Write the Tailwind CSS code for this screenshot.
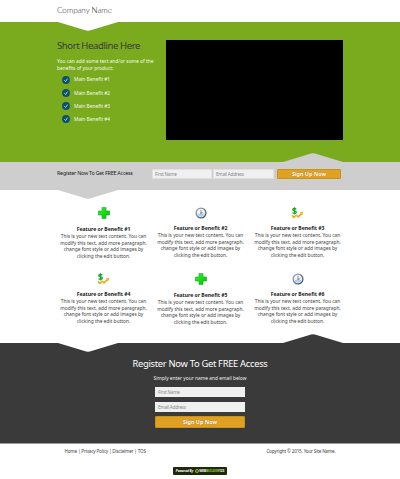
<!DOCTYPE html>
<html lang="en">
<head>
<meta charset="utf-8">
<title>Company Name</title>
<script src="https://cdn.jsdelivr.net/npm/@tailwindcss/browser@4"></script>
</head>
<body class="w-[400px] h-[479px] overflow-hidden bg-white font-['Noto_Sans','Open_Sans',sans-serif] text-[4.85px] leading-[6.6px] text-[#444]">
<svg class="absolute w-0 h-0">
  <defs>
    <linearGradient id="gr" x1="0" y1="0" x2="1" y2="1"><stop offset="0" stop-color="#4be34b"/><stop offset=".5" stop-color="#11e011"/><stop offset="1" stop-color="#08b508"/></linearGradient>
    <linearGradient id="rim" x1="0" y1="0" x2="1" y2="1"><stop offset="0" stop-color="#a5adb6"/><stop offset="1" stop-color="#2f4664"/></linearGradient>
    <symbol id="plus" viewBox="0 0 12 12"><path d="M4 .4h4V4h3.6v4H8v3.6H4V8H.4V4H4z" fill="url(#gr)" stroke="#20a020" stroke-width=".6" stroke-linejoin="round"/></symbol>
    <symbol id="clock" viewBox="0 0 12 12"><circle cx="6" cy="6" r="4.9" fill="#f0f7fd" stroke="url(#rim)" stroke-width="1.3"/><path d="M2.2 6.8a3.9 3.9 0 0 0 7.6 0z" fill="#a9d2f5"/><path d="M6 2.8V6.3L8.2 5.6" fill="none" stroke="#5b6f88" stroke-width=".7"/><circle cx="6" cy="6.3" r="1" fill="#ee8b3c"/></symbol>
    <symbol id="money" viewBox="0 0 13 12"><path d="M1.2 8.2l1.6 2.3 2.4-2.2 1.9 1.6 3.7-3.5" fill="none" stroke="#efa51c" stroke-width="1.5" stroke-linejoin="round"/><path d="M8.8 5.2l3.4-.5-.5 3.3z" fill="#f4b52b"/><path d="M5.2 2.2C4.5 1.2 1.8 1.2 1.8 2.7c0 1.6 3.5.9 3.5 2.6 0 1.5-2.9 1.5-3.7.3M3.5.3v7.2" fill="none" stroke="#16a826" stroke-width="1.3"/></symbol>
    <symbol id="check" viewBox="0 0 8 8"><circle cx="4" cy="4" r="3.9" fill="#0b4f78"/><path d="M2.3 4.2l1.3 1.4 2-3.1" fill="none" stroke="#a9d58a" stroke-width="1"/></symbol>
    <symbol id="down" viewBox="0 0 60 9"><path d="M0 0h60L33.5 8.1Q30 9.3 26.5 8.1z" fill="currentColor"/></symbol>
    <symbol id="up" viewBox="0 0 60 9"><path d="M0 9h60L33.5.9Q30-.3 26.5.9z" fill="currentColor"/></symbol>
  </defs>
</svg>

<header class="relative h-[22px] pl-[57px] pt-[4px]">
  <h1 class="font-[Lato] font-light text-[8px] leading-[12px] tracking-[-0.03px] text-[#222] whitespace-nowrap">Company Name</h1>
  <svg class="absolute left-[58px] top-[22px] w-[60px] h-[9px] text-white z-10"><use href="#down"/></svg>
</header>

<section class="relative h-[140px] bg-[#7aab1e] flex pl-[57px] text-[#f4f9ea]">
  <div class="w-[109px] pt-[17px] whitespace-nowrap">
    <h2 class="text-[9.6px] leading-[14px] tracking-[-0.43px] text-[#3a3a3a]">Short Headline Here</h2>
    <p class="mt-[5px] leading-[6.6px]">You can add some text and/or some of the<br>benefits of your product:</p>
    <ul class="mt-[2px] pl-[5px]">
      <li class="flex items-center h-[13.2px] gap-[4px]"><svg class="size-[8px]"><use href="#check"/></svg>Main Benefit #1</li>
      <li class="flex items-center h-[13.2px] gap-[4px]"><svg class="size-[8px]"><use href="#check"/></svg>Main Benefit #2</li>
      <li class="flex items-center h-[13.2px] gap-[4px]"><svg class="size-[8px]"><use href="#check"/></svg>Main Benefit #3</li>
      <li class="flex items-center h-[13.2px] gap-[4px]"><svg class="size-[8px]"><use href="#check"/></svg>Main Benefit #4</li>
    </ul>
  </div>
  <div class="mt-[18px] w-[177px] h-[100px] bg-black"></div>
  <svg class="absolute left-[283px] top-[131px] w-[60px] h-[9px] text-[#cecece]"><use href="#up"/></svg>
</section>

<section class="relative h-[28px] bg-[#cecece] flex pl-[57px] pt-[7px] whitespace-nowrap">
  <h3 class="w-[95px] leading-[8px] text-[5.4px] tracking-[-0.24px] text-[#222]">Register Now To Get FREE Access</h3>
  <div class="w-[60px] h-[10px] bg-[#f0f0f0] border border-[#e0e0e0] pl-[2px] leading-[8px] text-[4.6px] tracking-[-0.17px] text-[#8a8a8a]">First Name</div>
  <div class="ml-[1px] w-[61px] h-[10px] bg-[#f0f0f0] border border-[#e0e0e0] pl-[2px] leading-[8px] text-[4.6px] tracking-[-0.2px] text-[#8a8a8a]">Email Address</div>
  <button class="ml-[3px] w-[64px] h-[10px] rounded-[1px] bg-[#dfa324] border-[0.5px] border-[#c8901c] text-white font-bold text-[5.4px] leading-[9px] text-shadow-[0_0_1px_#8a6010]">Sign Up Now</button>
  <svg class="absolute left-[58px] top-[28px] w-[60px] h-[9px] text-[#cecece]"><use href="#down"/></svg>
</section>

<main class="h-[153px] pl-[55px] pt-[17px] grid grid-cols-[repeat(3,97px)] grid-rows-[66px_66px] text-center whitespace-nowrap">
  <article class="flex flex-col items-center">
    <svg class="size-[12px]"><use href="#plus"/></svg>
    <h4 class="mt-[7px] font-bold text-[5.1px] text-[#222] leading-[7px]">Feature or Benefit #1</h4>
    <p>This is your new text content. You can<br>modify this text, add more paragraph,<br>change font style or add images by<br>clicking the edit button.</p>
  </article>
  <article class="flex flex-col items-center">
    <svg class="size-[12px]"><use href="#clock"/></svg>
    <h4 class="mt-[6px] font-bold text-[5.1px] text-[#222] leading-[7px]">Feature or Benefit #2</h4>
    <p>This is your new text content. You can<br>modify this text, add more paragraph,<br>change font style or add images by<br>clicking the edit button.</p>
  </article>
  <article class="flex flex-col items-center">
    <svg class="w-[13px] h-[12px]"><use href="#money"/></svg>
    <h4 class="mt-[6px] font-bold text-[5.1px] text-[#222] leading-[7px]">Feature or Benefit #3</h4>
    <p>This is your new text content. You can<br>modify this text, add more paragraph,<br>change font style or add images by<br>clicking the edit button.</p>
  </article>
  <article class="flex flex-col items-center">
    <svg class="w-[13px] h-[12px]"><use href="#money"/></svg>
    <h4 class="mt-[6px] font-bold text-[5.1px] text-[#222] leading-[7px]">Feature or Benefit #4</h4>
    <p>This is your new text content. You can<br>modify this text, add more paragraph,<br>change font style or add images by<br>clicking the edit button.</p>
  </article>
  <article class="flex flex-col items-center">
    <svg class="size-[12px]"><use href="#plus"/></svg>
    <h4 class="mt-[7px] font-bold text-[5.1px] text-[#222] leading-[7px]">Feature or Benefit #5</h4>
    <p>This is your new text content. You can<br>modify this text, add more paragraph,<br>change font style or add images by<br>clicking the edit button.</p>
  </article>
  <article class="flex flex-col items-center">
    <svg class="size-[12px]"><use href="#clock"/></svg>
    <h4 class="mt-[6px] font-bold text-[5.1px] text-[#222] leading-[7px]">Feature or Benefit #6</h4>
    <p>This is your new text content. You can<br>modify this text, add more paragraph,<br>change font style or add images by<br>clicking the edit button.</p>
  </article>
</main>

<section class="relative h-[101px] bg-[#3a3a3a] border-b border-[#999] flex flex-col items-center pt-[14px] whitespace-nowrap text-[#eee]">
  <svg class="absolute left-[58px] top-0 w-[60px] h-[9px] text-white"><use href="#down"/></svg>
  <svg class="absolute left-[283px] -top-[9px] w-[60px] h-[9px] text-[#3a3a3a]"><use href="#up"/></svg>
  <h2 class="text-[9.4px] leading-[13px] tracking-[-0.31px] text-white">Register Now To Get FREE Access</h2>
  <p class="mt-[5px] leading-[7px]">Simply enter your name and email below</p>
  <div class="mt-[5px] w-[90px] h-[10px] bg-[#f0f0f0] pl-[3px] leading-[10px] text-[4.6px] tracking-[-0.17px] text-[#8a8a8a]">First Name</div>
  <div class="mt-[5px] w-[90px] h-[10px] bg-[#f0f0f0] pl-[3px] leading-[10px] text-[4.6px] tracking-[-0.2px] text-[#8a8a8a]">Email Address</div>
  <button class="mt-[4px] w-[90px] h-[12px] rounded-[1px] bg-[#e0a123] border-[0.5px] border-[#c8901c] text-white font-bold text-[5.4px] leading-[11px] text-shadow-[0_0_1px_#8a6010]">Sign Up Now</button>
</section>

<footer class="flex flex-col items-center whitespace-nowrap">
  <div class="w-[271px] pt-[4px] flex justify-between text-[4.6px] tracking-[-0.17px] leading-[7px]">
    <nav>Home | Privacy Policy | Disclaimer | TOS</nav>
    <p>Copyright © 2015. Your Site Name.</p>
  </div>
  <div class="mt-[12px] w-[54px] h-[8px] rounded-[1px] bg-[#20280c] flex items-center justify-center gap-[1.5px] text-white text-[3.2px] leading-[8px] font-bold">
    <span class="italic">Powered By</span>
    <svg class="size-[4px]" viewBox="0 0 4 4"><circle cx="2" cy="2" r="1.6" fill="none" stroke="#9acb25" stroke-width=".8"/><path d="M.5 2h3" stroke="#9acb25" stroke-width=".6"/></svg>
    <span class="-ml-[1px] tracking-[-0.1px]">WEB<span class="text-[#9acb25]">BUILDER</span>123</span>
  </div>
</footer>
</body>
</html>
